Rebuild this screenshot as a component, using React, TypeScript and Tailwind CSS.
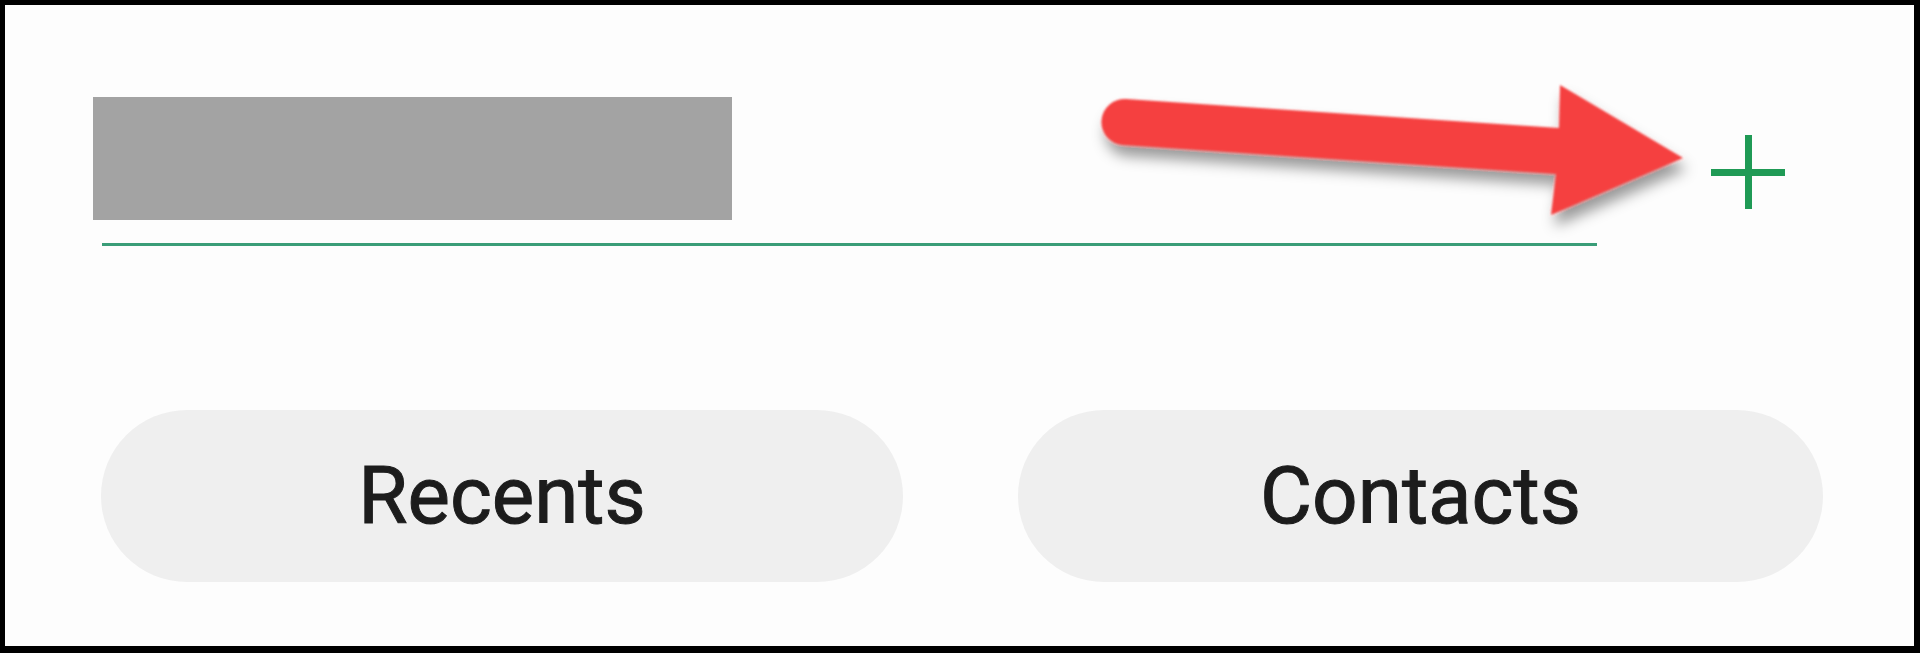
import React from "react";

function Plus() {
  return (
    <svg width="74" height="74" viewBox="0 0 74 74" className="block">
      <rect x="0" y="34" width="74" height="7" fill="#1f9a55" />
      <rect x="34" y="0" width="7" height="74" fill="#1f9a55" />
    </svg>
  );
}

function PointerArrow() {
  return (
    <svg
      width="640"
      height="200"
      viewBox="0 0 640 200"
      className="absolute left-[1075px] top-[65px] pointer-events-none"
    >
      <defs>
        <filter id="arrowShadow" x="-10%" y="-30%" width="130%" height="170%">
          <feGaussianBlur in="SourceGraphic" stdDeviation="1" result="soft" />
          <feDropShadow in="soft" dx="4" dy="11" stdDeviation="7" floodColor="#000" floodOpacity="0.4" />
        </filter>
      </defs>
      <path
        d="M 46 29 L 479 58 L 480 15 L 603 88 L 471 145 L 476 104 L 43 75 A 23 23 0 0 1 46 29 Z"
        fill="#f53f3f"
        filter="url(#arrowShadow)"
      />
    </svg>
  );
}

function Pill({ label, width }: { label: string; width: string }) {
  return (
    <div
      className={`${width} h-[172px] rounded-full bg-[#efefef] flex items-center justify-center`}
    >
      <span className="text-[80px] font-normal text-[#1c1c1c] leading-none [-webkit-text-stroke:1px_#1c1c1c]">
        {label}
      </span>
    </div>
  );
}

export default function App() {
  return (
    <div
      className="w-full h-[653px] bg-black pt-[5px] pl-[5px] pr-[6px] pb-[7px]"
      style={{ fontFamily: "Roboto, 'Noto Sans', sans-serif" }}
    >
      <div className="relative h-full bg-[#fdfdfd] flex flex-col overflow-hidden">
        <div className="flex items-start pl-[88px] pt-[92px] pr-[129px]">
          <div className="w-[639px] h-[123px] bg-[#a3a3a3]" />
          <div className="ml-auto mt-[38px]">
            <Plus />
          </div>
        </div>
        <div className="ml-[97px] mt-[23px] w-[1495px] h-[3px] bg-[#3a9d78]" />
        <div className="flex gap-[115px] pl-[96px] mt-[164px]">
          <Pill label="Recents" width="w-[802px]" />
          <Pill label="Contacts" width="w-[805px]" />
        </div>
        <PointerArrow />
      </div>
    </div>
  );
}
